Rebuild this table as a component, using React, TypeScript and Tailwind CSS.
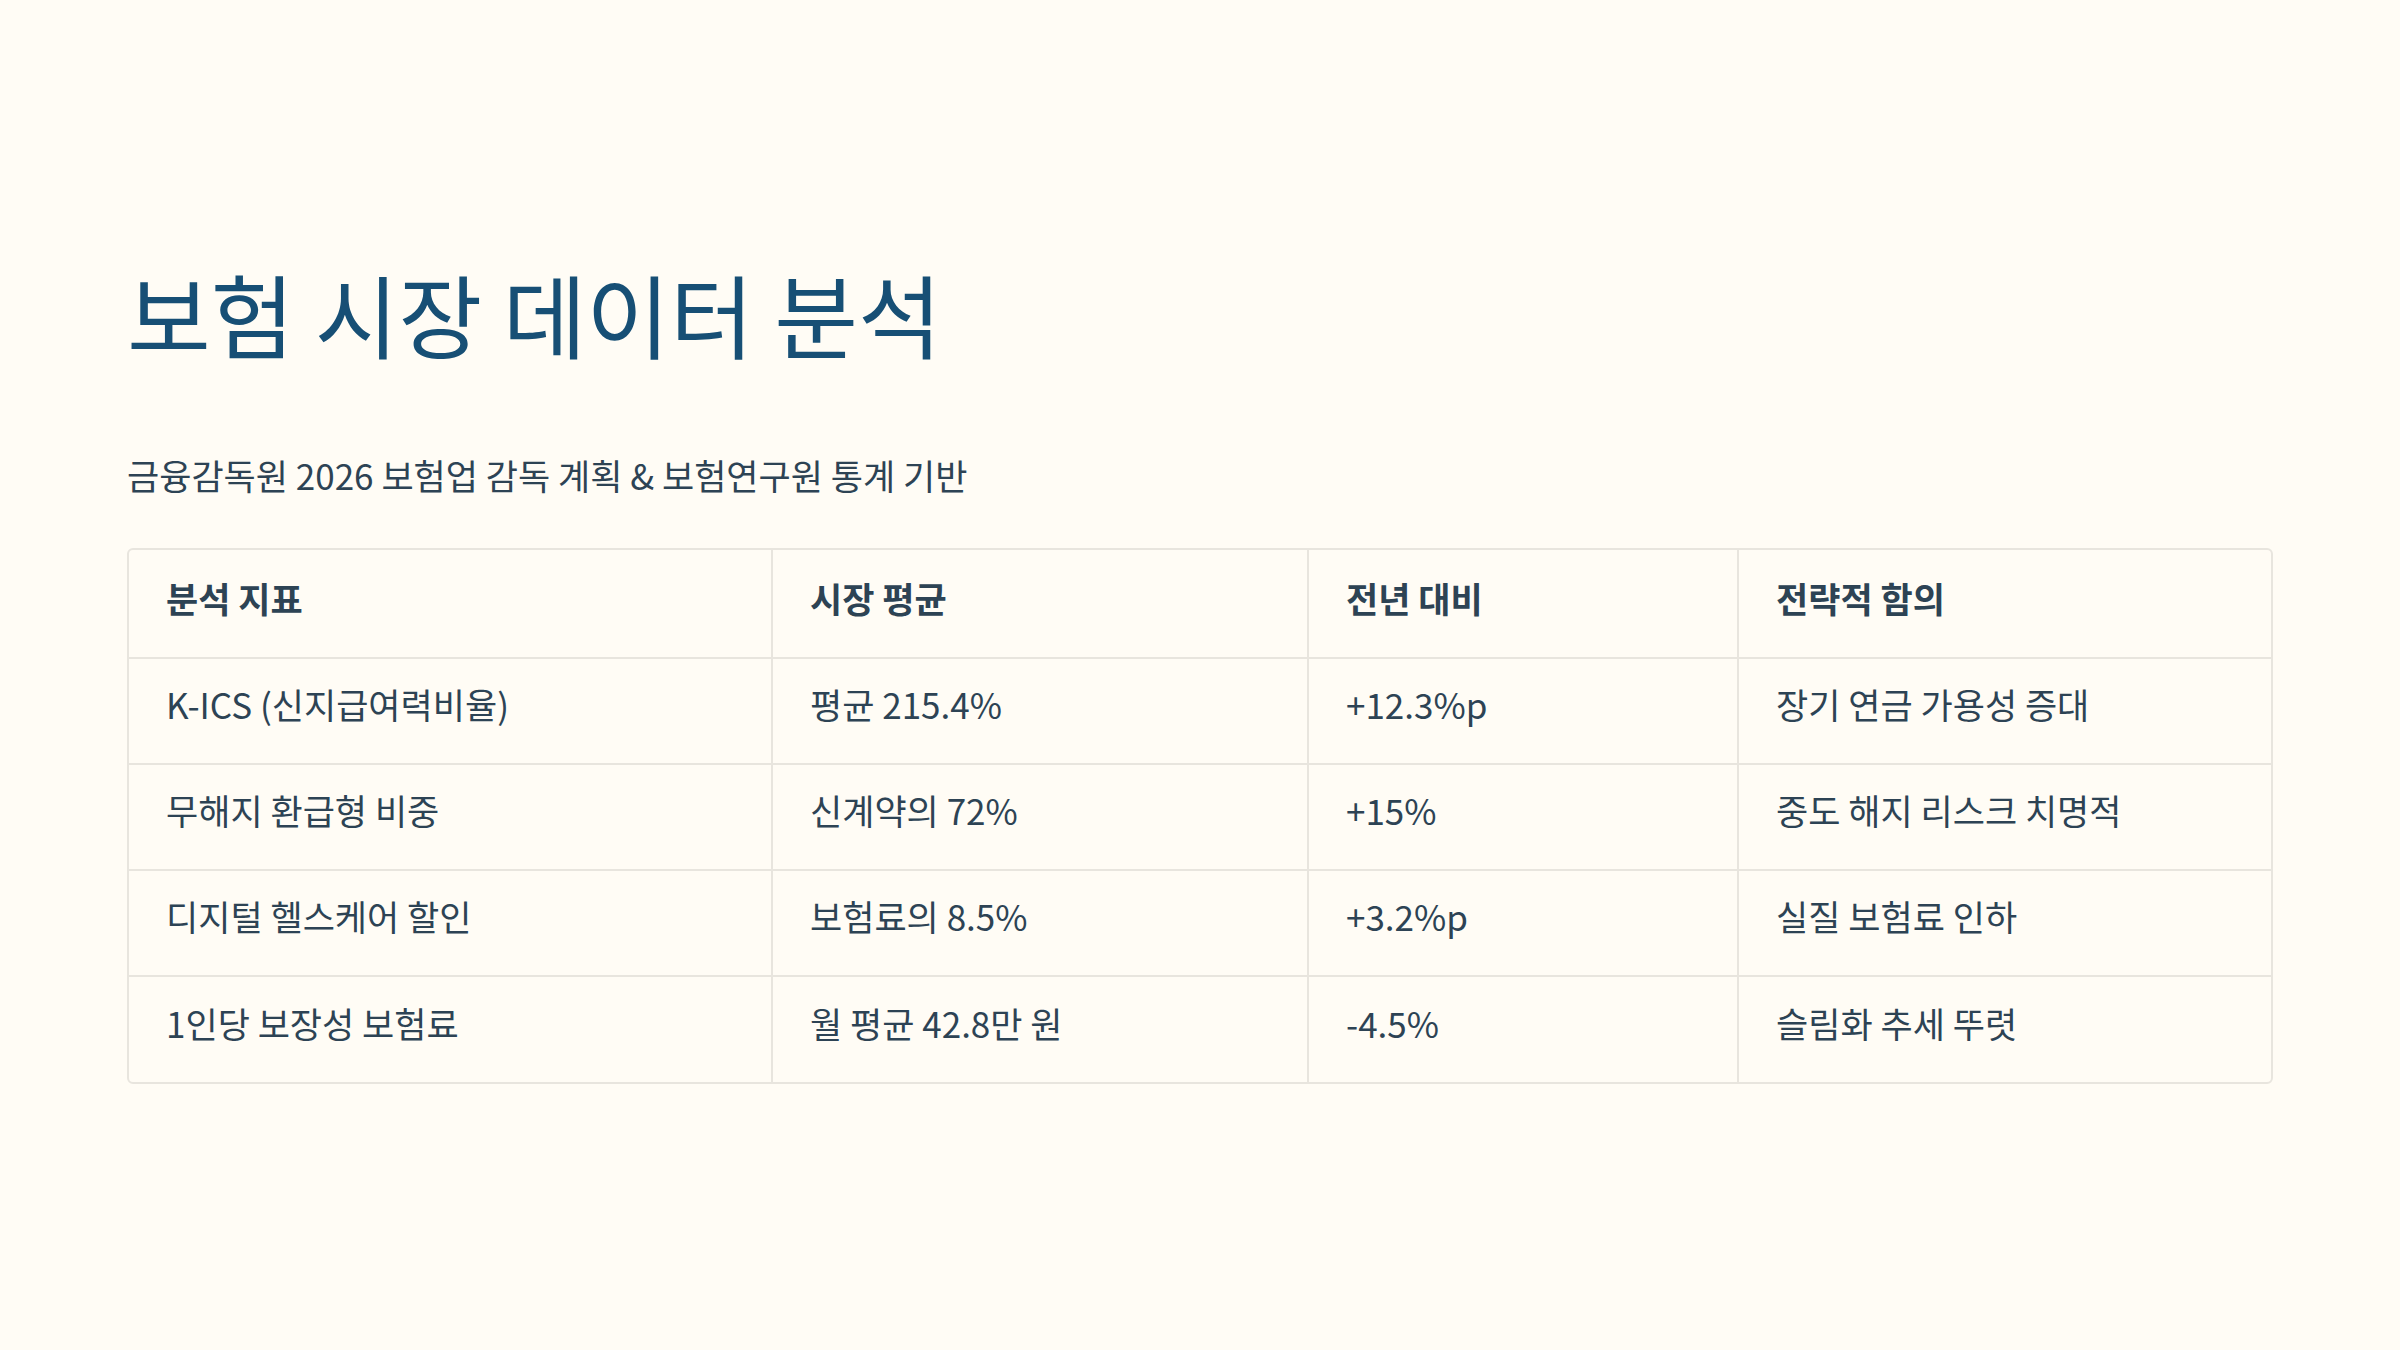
const rows = [
  { metric: "K-ICS (신지급여력비율)", avg: "평균 215.4%", yoy: "+12.3%p", note: "장기 연금 가용성 증대" },
  { metric: "무해지 환급형 비중", avg: "신계약의 72%", yoy: "+15%", note: "중도 해지 리스크 치명적" },
  { metric: "디지털 헬스케어 할인", avg: "보험료의 8.5%", yoy: "+3.2%p", note: "실질 보험료 인하" },
  { metric: "1인당 보장성 보험료", avg: "월 평균 42.8만 원", yoy: "-4.5%", note: "슬림화 추세 뚜렷" },
]

const headers = ["분석 지표", "시장 평균", "전년 대비", "전략적 함의"]

export default function App() {
  return (
    <div
      className="w-[2400px] h-[1350px] bg-[#fffcf5] flex flex-col justify-center px-[127px] text-[#2d4354]"
      style={{ fontFamily: '"Noto Sans CJK KR", "Noto Sans", sans-serif' }}
    >
      <h1 className="text-[91px] leading-none text-[#174f75] font-normal">
        보험 시장 데이터 분석
      </h1>
      <p className="mt-[99px] text-[35px] leading-none">
        금융감독원 2026 보험업 감독 계획 &amp; 보험연구원 통계 기반
      </p>

      <div className="mt-[56px] border-2 border-[#e8e5de] rounded-[6px] overflow-hidden">
        <table className="w-full border-collapse text-[35px]">
          <colgroup>
            <col className="w-[643px]" />
            <col className="w-[536px]" />
            <col className="w-[430px]" />
            <col />
          </colgroup>
          <thead>
            <tr className="h-[108px] border-b-2 border-[#e8e5de]">
              {headers.map((h, i) => (
                <th
                  key={h}
                  className={`text-left font-bold px-[37px] pb-[10px] ${i > 0 ? "border-l-2 border-[#e8e5de]" : ""}`}
                >
                  {h}
                </th>
              ))}
            </tr>
          </thead>
          <tbody>
            {rows.map((r, idx) => (
              <tr
                key={r.metric}
                className={`h-[106px] ${idx < rows.length - 1 ? "border-b-2 border-[#e8e5de]" : ""}`}
              >
                <td className="px-[37px] pb-[12px]">{r.metric}</td>
                <td className="px-[37px] pb-[12px] border-l-2 border-[#e8e5de]">{r.avg}</td>
                <td className="px-[37px] pb-[12px] border-l-2 border-[#e8e5de]">{r.yoy}</td>
                <td className="px-[37px] pb-[12px] border-l-2 border-[#e8e5de]">{r.note}</td>
              </tr>
            ))}
          </tbody>
        </table>
      </div>
    </div>
  )
}
